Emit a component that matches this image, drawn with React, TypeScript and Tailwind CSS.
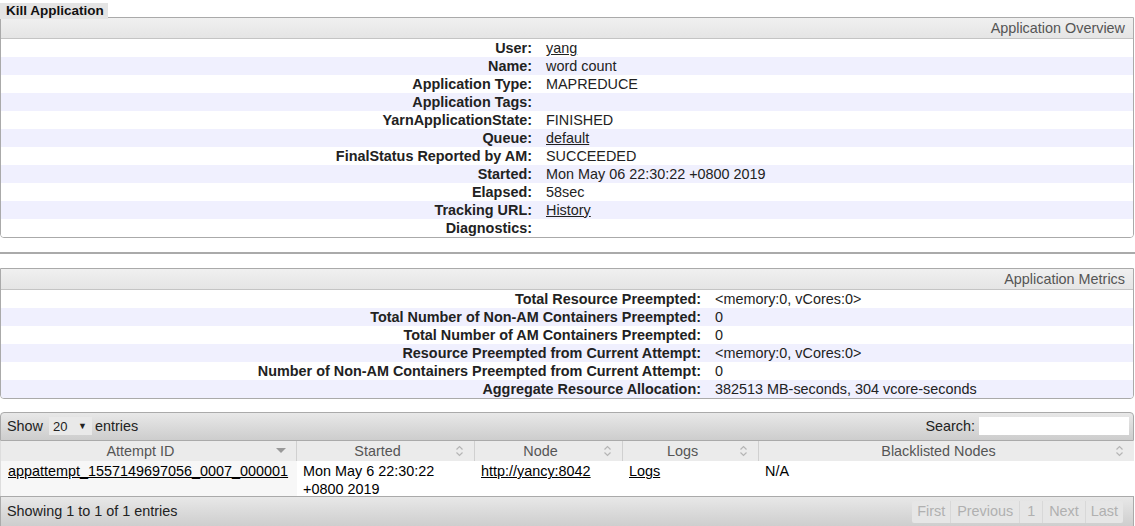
import React from 'react';

const font = { fontFamily: '"Liberation Sans", Arial, sans-serif' };

const OVERVIEW: Array<[string, React.ReactNode]> = [
  ['User:', <a className="underline">yang</a>],
  ['Name:', 'word count'],
  ['Application Type:', 'MAPREDUCE'],
  ['Application Tags:', ''],
  ['YarnApplicationState:', 'FINISHED'],
  ['Queue:', <a className="underline">default</a>],
  ['FinalStatus Reported by AM:', 'SUCCEEDED'],
  ['Started:', 'Mon May 06 22:30:22 +0800 2019'],
  ['Elapsed:', '58sec'],
  ['Tracking URL:', <a className="underline">History</a>],
  ['Diagnostics:', ''],
];

const METRICS: Array<[string, string]> = [
  ['Total Resource Preempted:', '<memory:0, vCores:0>'],
  ['Total Number of Non-AM Containers Preempted:', '0'],
  ['Total Number of AM Containers Preempted:', '0'],
  ['Resource Preempted from Current Attempt:', '<memory:0, vCores:0>'],
  ['Number of Non-AM Containers Preempted from Current Attempt:', '0'],
  ['Aggregate Resource Allocation:', '382513 MB-seconds, 304 vcore-seconds'],
];

// Info block like YARN's "info" tables
function InfoBox({ title, rows, labelWidth }: { title: string; rows: Array<[string, React.ReactNode]>; labelWidth: string }) {
  return (
    <div className="border border-[#aaa] rounded-b-[4px] w-[1134px] overflow-hidden">
      <div className="h-[21px] border-b border-[#c4c4c4] bg-gradient-to-b from-[#f0f0f0] to-[#e5e5e5] text-right pr-[8px] text-[#555] leading-[21px]">
        {title}
      </div>
      {rows.map(([label, value], i) => (
        <div key={label} className={`flex h-[18px] leading-[18px] ${i % 2 === 1 ? 'bg-[#f0f0fe]' : 'bg-white'}`}>
          <div className={`${labelWidth} shrink-0 text-right font-bold text-[#222] whitespace-nowrap`}>{label}</div>
          <div className="pl-[14px] text-[#222] whitespace-nowrap">{value}</div>
        </div>
      ))}
    </div>
  );
}

function SortBoth() {
  return (
    <svg width="9" height="12" viewBox="0 0 9 12" className="shrink-0">
      <path d="M1.5 4.5 L4.5 1.5 L7.5 4.5" fill="none" stroke="#b5b5b5" strokeWidth="1.2" />
      <path d="M1.5 7.5 L4.5 10.5 L7.5 7.5" fill="none" stroke="#b5b5b5" strokeWidth="1.2" />
    </svg>
  );
}

function SortDesc() {
  return (
    <svg width="10" height="6" viewBox="0 0 10 6" className="shrink-0">
      <path d="M0 0 L10 0 L5 5 Z" fill="#999" />
    </svg>
  );
}

const COLS: Array<{ name: string; w: string; sorted?: boolean }> = [
  { name: 'Attempt ID', w: 'w-[296px]', sorted: true },
  { name: 'Started', w: 'w-[178px]' },
  { name: 'Node', w: 'w-[148px]' },
  { name: 'Logs', w: 'w-[136px]' },
  { name: 'Blacklisted Nodes', w: 'flex-1' },
];

export default function App() {
  return (
    <div className="w-[1135px] h-[526px] overflow-hidden bg-white text-[14.4px] text-black" style={font}>
      <div className="h-[17px]">
        <span className="inline-block h-[16px] w-[108px] bg-[#e4e4e4] pl-[6px] font-bold text-[13.5px] leading-[16px] text-[#111]">
          Kill Application
        </span>
      </div>

      <InfoBox title="Application Overview" rows={OVERVIEW} labelWidth="w-[531px]" />

      <div className="mt-[14px] h-[2px] bg-[#aaa]" />

      <div className="mt-[14px]">
        <InfoBox title="Application Metrics" rows={METRICS} labelWidth="w-[700px]" />
      </div>

      {/* attempts table */}
      <div className="mt-[13px] w-[1134px]">
        <div className="h-[29px] border border-[#aaa] rounded-t-[4px] bg-gradient-to-b from-[#e8e8e8] to-[#cdcdcd] flex items-center justify-between pl-[6px] pr-[4px] text-[#222]">
          <div className="flex items-center">
            <span>Show</span>
            <span className="ml-[6px] mr-[3px] flex items-center h-[18px] w-[43px] bg-[#e9e9e9] pl-[4px] text-[13px]">
              20
              <span className="ml-auto mr-[5px] text-[9px] leading-none">▼</span>
            </span>
            <span>entries</span>
          </div>
          <div className="flex items-center">
            <span>Search:</span>
            <span className="ml-[4px] h-[18px] w-[150px] bg-white" />
          </div>
        </div>

        <div className="flex h-[20px] bg-[#ebebeb] border-l border-[#ddd] text-[#555] leading-[20px]">
          {COLS.map((c) => (
            <div key={c.name} className={`${c.w} relative flex items-center justify-center pr-[16px] border-r border-[#d0d0d0] last:border-r-0`}>
              <span>{c.name}</span>
              <span className="absolute right-[10px] top-[4px] flex h-[12px] items-center">
                {c.sorted ? <SortDesc /> : <SortBoth />}
              </span>
            </div>
          ))}
        </div>

        <div className="flex h-[35px] leading-[18px] border-l border-[#ddd]">
          <div className="w-[296px] bg-[#f7f7f7] pl-[7px] pt-[1px] whitespace-nowrap">
            <a className="underline">appattempt_1557149697056_0007_000001</a>
          </div>
          <div className="w-[178px] pl-[6px] pr-[8px] pt-[1px]">Mon May 6 22:30:22 +0800 2019</div>
          <div className="w-[148px] pl-[6px] pt-[1px]">
            <a className="underline">http://yancy:8042</a>
          </div>
          <div className="w-[136px] pl-[6px] pt-[1px]">
            <a className="underline">Logs</a>
          </div>
          <div className="flex-1 pl-[6px] pt-[1px]">N/A</div>
        </div>

        <div className="h-[32px] border border-[#aaa] bg-gradient-to-b from-[#e8e8e8] to-[#cdcdcd] flex items-center justify-between pl-[6px] pr-[10px] text-[#222]">
          <span>Showing 1 to 1 of 1 entries</span>
          <div className="flex h-[22px] items-center text-[#b0b0b0] bg-[#e6e6e6] rounded-[2px]">
            <span className="px-[5px] border-r border-[#d8d8d8]">First</span>
            <span className="px-[6px] border-r border-[#d8d8d8]">Previous</span>
            <span className="px-[7px] border-r border-[#d8d8d8]">1</span>
            <span className="px-[6px] border-r border-[#d8d8d8]">Next</span>
            <span className="px-[5px]">Last</span>
          </div>
        </div>
      </div>
    </div>
  );
}
